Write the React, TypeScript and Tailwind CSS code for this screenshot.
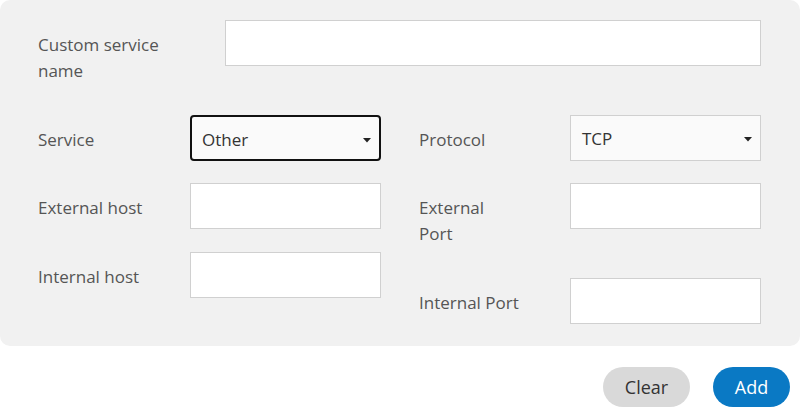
import React from "react";

const font = { fontFamily: '"Open Sans", "Noto Sans", sans-serif' };

function Caret() {
  return (
    <svg width="8" height="5" viewBox="0 0 8 5" className="absolute right-[8px] top-[21px]">
      <path d="M0 0 L8 0 L4 4.5 Z" fill="#222" />
    </svg>
  );
}

function Label({ children, w }: { children: React.ReactNode; w: string }) {
  return (
    <div className={`${w} shrink-0 pt-[12px] text-[17px] leading-[26px] text-[#555]`}>{children}</div>
  );
}

function Input() {
  return <div className="h-[46px] w-[191px] border border-[#d0d0d0] bg-white" />;
}

export default function App() {
  return (
    <div className="w-[800px] h-[409px] bg-white overflow-hidden" style={font}>
      <div className="h-[346px] rounded-[10px] bg-[#f1f1f1] pl-[38px] pr-[39px] pt-[20px]">
        <div className="flex">
          <Label w="w-[187px]">
            Custom service
            <br />
            name
          </Label>
          <div className="h-[46px] flex-1 border border-[#d0d0d0] bg-white" />
        </div>
        <div className="mt-[31px] flex gap-[38px]">
          <div className="flex flex-col">
            <div className="flex">
              <Label w="w-[152px]">Service</Label>
              <div className="relative h-[46px] w-[191px] rounded-[4px] border-2 border-[#111] bg-[#fafafa] pl-[10px] pt-[1px] text-[17px] leading-[44px] text-[#333]">
                Other
                <Caret />
              </div>
            </div>
            <div className="mt-[22px] flex">
              <Label w="w-[152px]">External host</Label>
              <Input />
            </div>
            <div className="mt-[23px] flex">
              <Label w="w-[152px]">Internal host</Label>
              <Input />
            </div>
          </div>
          <div className="flex flex-col">
            <div className="flex">
              <Label w="w-[151px]">Protocol</Label>
              <div className="relative h-[46px] w-[191px] border border-[#d0d0d0] bg-[#fafafa] pl-[11px] pt-[1px] text-[17px] leading-[44px] text-[#333]">
                TCP
                <Caret />
              </div>
            </div>
            <div className="mt-[22px] flex items-start">
              <Label w="w-[151px]">
                External
                <br />
                Port
              </Label>
              <Input />
            </div>
            <div className="mt-[31px] flex">
              <Label w="w-[151px]">Internal Port</Label>
              <Input />
            </div>
          </div>
        </div>
      </div>
      <div className="mt-[21px] flex justify-end gap-[23px] pr-[10px]">
        <button className="h-[40px] w-[87px] rounded-full bg-[#d9d9d9] pt-[1px] text-[18px] text-[#333]" style={font}>
          Clear
        </button>
        <button className="h-[40px] w-[77px] rounded-full bg-[#0a79c4] pt-[1px] text-[18px] text-white" style={font}>
          Add
        </button>
      </div>
    </div>
  );
}
